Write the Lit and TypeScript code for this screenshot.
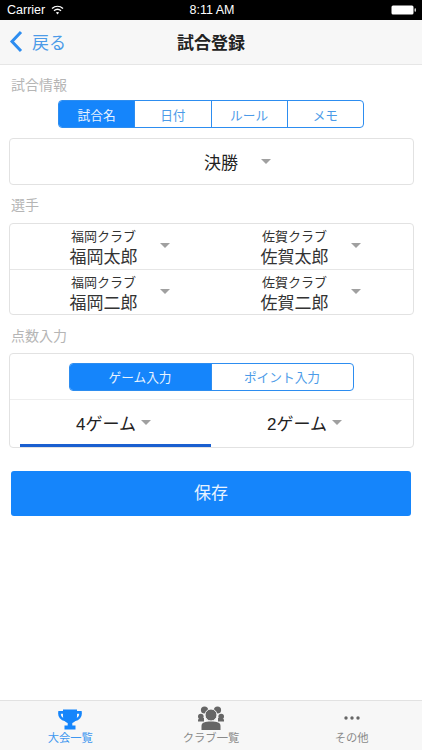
import { LitElement, html, css } from "lit";
import { customElement } from "lit/decorators.js";

const arrow = html`<span class="arrow"></span>`;

@customElement("app-root")
export class AppRoot extends LitElement {
  static styles = css`
    :host {
      display: flex;
      flex-direction: column;
      width: 422px;
      height: 750px;
      overflow: hidden;
      background: #fff;
      font-family: "Liberation Sans", "Noto Sans CJK JP", sans-serif;
      color: #222;
    }
    .status {
      height: 20px;
      background: #000;
      color: #fff;
      font-size: 12.5px;
      display: grid;
      grid-template-columns: 1fr auto 1fr;
      align-items: center;
      padding: 0 5px 0 7px;
    }
    .status .left { display: flex; align-items: center; gap: 6px; }
    .status .right { display: flex; justify-content: flex-end; }
    .batt { display: block; }
    .nav {
      height: 43px;
      padding: 0 9px 1px;
      background: #f7f7f7;
      border-bottom: 1px solid #e6e6e6;
      display: grid;
      grid-template-columns: 1fr auto 1fr;
      align-items: center;
    }
    .back { display: flex; align-items: center; gap: 9px; color: #4c9be8; font-size: 17px; }
    .title { font-size: 17px; font-weight: 700; color: #222; }
    main { flex: 1; display: flex; flex-direction: column; padding: 0 8px; min-height: 0; }
    .label { color: #b5b5b5; font-size: 14px; line-height: 20px; padding-left: 3px; }
    .l1 { margin-top: 10px; }
    .l2 { margin-top: 10px; }
    .l3 { margin-top: 11px; }
    .seg {
      display: flex;
      border: 1px solid #2d8df0;
      border-radius: 4px;
      overflow: hidden;
      color: #4c9be8;
    }
    .seg span {
      flex: 1;
      display: flex;
      align-items: center;
      justify-content: center;
      font-size: 12.7px;
    }
    .seg span + span { border-left: 1px solid #2d8df0; }
    .seg .on { background: #1585fb; color: #e8f3ff; }
    .seg1 { width: 306px; height: 28px; margin: 5px 0 0 50px; box-sizing: border-box; }
    .card { border: 1px solid #e2e2e2; border-radius: 4px; box-sizing: border-box; width: 405px; margin-left: 1px; }
    .final {
      height: 47px;
      margin-top: 10px;
      padding: 0 0 1px 52px;
      display: flex;
      align-items: center;
      justify-content: center;
      gap: 23px;
      font-size: 17px;
    }
    .arrow {
      width: 0;
      height: 0;
      border-left: 5.5px solid transparent;
      border-right: 5.5px solid transparent;
      border-top: 5.5px solid #a0a0a0;
      flex: none;
    }
    .players { margin-top: 8px; height: 92px; display: flex; flex-direction: column; }
    .row { flex: 1; display: grid; grid-template-columns: 191px 191px; padding-left: 14px; }
    .row + .row { border-top: 1px solid #e6e6e6; }
    .pick { display: flex; align-items: center; justify-content: center; gap: 22px; padding-top: 4px; }
    .pick .arrow { margin-top: -6px; }
    .who { display: flex; flex-direction: column; align-items: center; }
    .club { font-size: 13px; line-height: 17px; color: #333; }
    .name { font-size: 17px; line-height: 23px; color: #333; margin-top: 1px; }
    .score { margin-top: 7px; height: 95px; display: flex; flex-direction: column; }
    .seg-wrap { height: 46px; padding: 0 1px 0 0; box-sizing: border-box; display: flex; align-items: center; justify-content: center; border-bottom: 1px solid #eee; }
    .seg2 { width: 285px; height: 28px; box-sizing: border-box; }
    .games { flex: 1; display: grid; grid-template-columns: 191px 191px; padding-left: 10px; }
    .game {
      display: flex;
      align-items: center;
      justify-content: center;
      gap: 5px;
      font-size: 17px;
      padding: 0 4px 0 0;
      border-bottom: 3px solid transparent;
    }
    .game.on { border-bottom-color: #1a5fd0; }
    .save {
      margin: 23px 0 0 3px;
      width: 400px;
      height: 45px;
      padding-bottom: 4px;
      box-sizing: border-box;
      border-radius: 3px;
      background: #1585fb;
      color: #e8f3ff;
      font-size: 17px;
      display: flex;
      align-items: center;
      justify-content: center;
    }
    .tabs {
      height: 49px;
      background: #f7f7f7;
      border-top: 1px solid #e2e2e2;
      display: grid;
      grid-template-columns: 1fr 1fr 1fr;
    }
    .tab {
      display: flex;
      flex-direction: column;
      align-items: center;
      justify-content: flex-end;
      font-size: 11.3px;
      line-height: 14px;
      color: #8a8a8a;
      padding-bottom: 5px;
    }
    .tab.on { color: #3f97f0; }
    .tab svg { display: block; margin-bottom: 1px; }
  `;

  private player(club: string, name: string) {
    return html`<div class="pick">
      <div class="who"><span class="club">${club}</span><span class="name">${name}</span></div>
      ${arrow}
    </div>`;
  }

  render() {
    return html`
      <div class="status">
        <div class="left">
          <span>Carrier</span>
          <svg width="13" height="10" viewBox="0 0 13 10" fill="none" stroke="#fff" stroke-width="1.4">
            <path d="M1 3.6C4.3 .6 8.7 .6 12 3.6" />
            <path d="M3 5.7C5 4 8 4 10 5.7" />
            <path d="M6.5 9.4L4.9 7.6C5.8 6.9 7.2 6.9 8.1 7.6Z" fill="#fff" stroke="none" />
          </svg>
        </div>
        <span>8:11 AM</span>
        <div class="right">
          <svg class="batt" width="26" height="10" viewBox="0 0 26 10">
            <rect x="0.5" y="0.5" width="22" height="9" rx="1.5" fill="#fff" />
            <rect x="23.5" y="3.2" width="1.5" height="3.6" rx="0.7" fill="#fff" opacity=".8" />
          </svg>
        </div>
      </div>
      <div class="nav">
        <div class="back">
          <svg width="14" height="23" viewBox="0 0 14 23" fill="none" stroke="#2d8df0" stroke-width="3">
            <path d="M12 2L3 11.5 12 21" />
          </svg>
          <span>戻る</span>
        </div>
        <div class="title">試合登録</div>
        <div></div>
      </div>
      <main>
        <div class="label l1">試合情報</div>
        <div class="seg seg1">
          <span class="on">試合名</span><span>日付</span><span>ルール</span><span>メモ</span>
        </div>
        <div class="card final"><span>決勝</span>${arrow}</div>
        <div class="label l2">選手</div>
        <div class="card players">
          <div class="row">${this.player("福岡クラブ", "福岡太郎")}${this.player("佐賀クラブ", "佐賀太郎")}</div>
          <div class="row">${this.player("福岡クラブ", "福岡二郎")}${this.player("佐賀クラブ", "佐賀二郎")}</div>
        </div>
        <div class="label l3">点数入力</div>
        <div class="card score">
          <div class="seg-wrap">
            <div class="seg seg2"><span class="on">ゲーム入力</span><span>ポイント入力</span></div>
          </div>
          <div class="games">
            <div class="game on"><span>4ゲーム</span>${arrow}</div>
            <div class="game"><span>2ゲーム</span>${arrow}</div>
          </div>
        </div>
        <div class="save">保存</div>
      </main>
      <div class="tabs">
        <div class="tab on">
          <svg width="24" height="21" viewBox="0 0 24 21">
            <path d="M5 0.500H19V7.500C19 11 16 13.500 14.300 14V16.500H17.500V20.500H6.500V16.500H9.700V14C8 13.500 5 11 5 7.500Z" fill="#1585fb" />
            <path d="M6 3.400H1.500C1 7.500 3.500 10.300 7.500 11M18 3.400H22.500C23 7.500 20.500 10.300 16.500 11" fill="none" stroke="#1585fb" stroke-width="2.600" />
          </svg>
          <span>大会一覧</span>
        </div>
        <div class="tab">
          <svg width="26" height="24" viewBox="0 0 26 24" fill="#666">
            <circle cx="6.500" cy="4" r="3.600" /><circle cx="19.500" cy="4" r="3.600" />
            <circle cx="2.800" cy="10.500" r="2.800" /><circle cx="23.200" cy="10.500" r="2.800" />
            <path d="M0 14.500C0 13 1 12 3 12H6V15.500H0Z" /><path d="M26 14.500C26 13 25 12 23 12H20V15.500H26Z" />
            <circle cx="13" cy="9" r="6" stroke="#f7f7f7" stroke-width="1" />
            <path d="M3.500 24V20C3.500 16.500 7 15.500 13 15.500S22.500 16.500 22.500 20V24Z" />
          </svg>
          <span>クラブ一覧</span>
        </div>
        <div class="tab">
          <svg width="16" height="24" viewBox="0 0 16 24" fill="#666">
            <circle cx="2" cy="12" r="1.700" /><circle cx="8" cy="12" r="1.700" /><circle cx="14" cy="12" r="1.700" />
          </svg>
          <span>その他</span>
        </div>
      </div>
    `;
  }
}
